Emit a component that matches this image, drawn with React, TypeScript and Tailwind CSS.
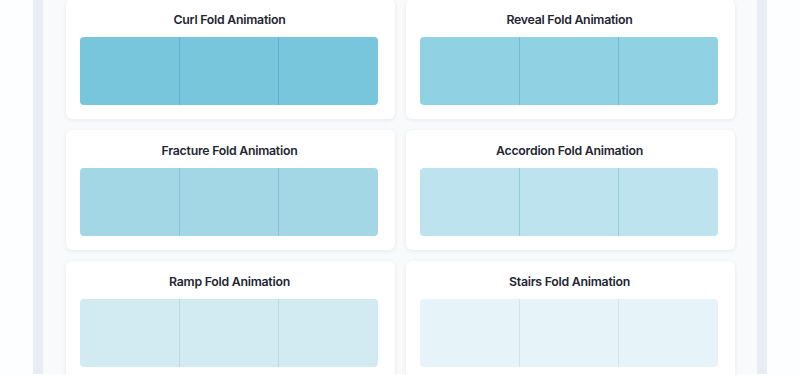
import React from "react";

type Item = { title: string; bg: string; line: string };

const items: Item[] = [
  { title: "Curl Fold Animation", bg: "bg-[#78c6dc]", line: "bg-[#5fb4cc]" },
  { title: "Reveal Fold Animation", bg: "bg-[#90d1e3]", line: "bg-[#6cbdd3]" },
  { title: "Fracture Fold Animation", bg: "bg-[#a4d7e6]", line: "bg-[#84c5d9]" },
  { title: "Accordion Fold Animation", bg: "bg-[#bde3ef]", line: "bg-[#95cde0]" },
  { title: "Ramp Fold Animation", bg: "bg-[#d2eaf1]", line: "bg-[#b6dbe7]" },
  { title: "Stairs Fold Animation", bg: "bg-[#e6f3f9]", line: "bg-[#cde5ee]" },
];

function Card({ item }: { item: Item }) {
  return (
    <div className="h-[120px] rounded-md bg-white pt-[13px] pl-[14px] shadow-[0_1px_4px_rgba(15,23,42,0.08)]">
      <div
        className="h-4 pr-[16px] text-center text-[12.3px] leading-4 font-semibold tracking-[-0.02em] text-[#1e2533]"
        style={{ fontFamily: "Inter, 'Noto Sans', sans-serif" }}
      >
        {item.title}
      </div>
      <div className={`mt-[9px] flex h-[68px] w-[298px] overflow-hidden rounded ${item.bg}`}>
        <div className="flex-1" />
        <div className={`w-px ${item.line}`} />
        <div className="flex-1" />
        <div className={`w-px ${item.line}`} />
        <div className="flex-1" />
      </div>
    </div>
  );
}

export default function App() {
  return (
    <div className="h-[375px] w-full overflow-hidden bg-[#fdfeff]">
      <div className="mx-auto h-full w-[734px] border-x-[10px] border-[#e8eef3] bg-[#f8fafc] pl-[23px] pr-[22px]">
        <div className="-mt-px grid grid-cols-2 gap-[11px]">
          {items.map((it) => (
            <Card key={it.title} item={it} />
          ))}
        </div>
      </div>
    </div>
  );
}
